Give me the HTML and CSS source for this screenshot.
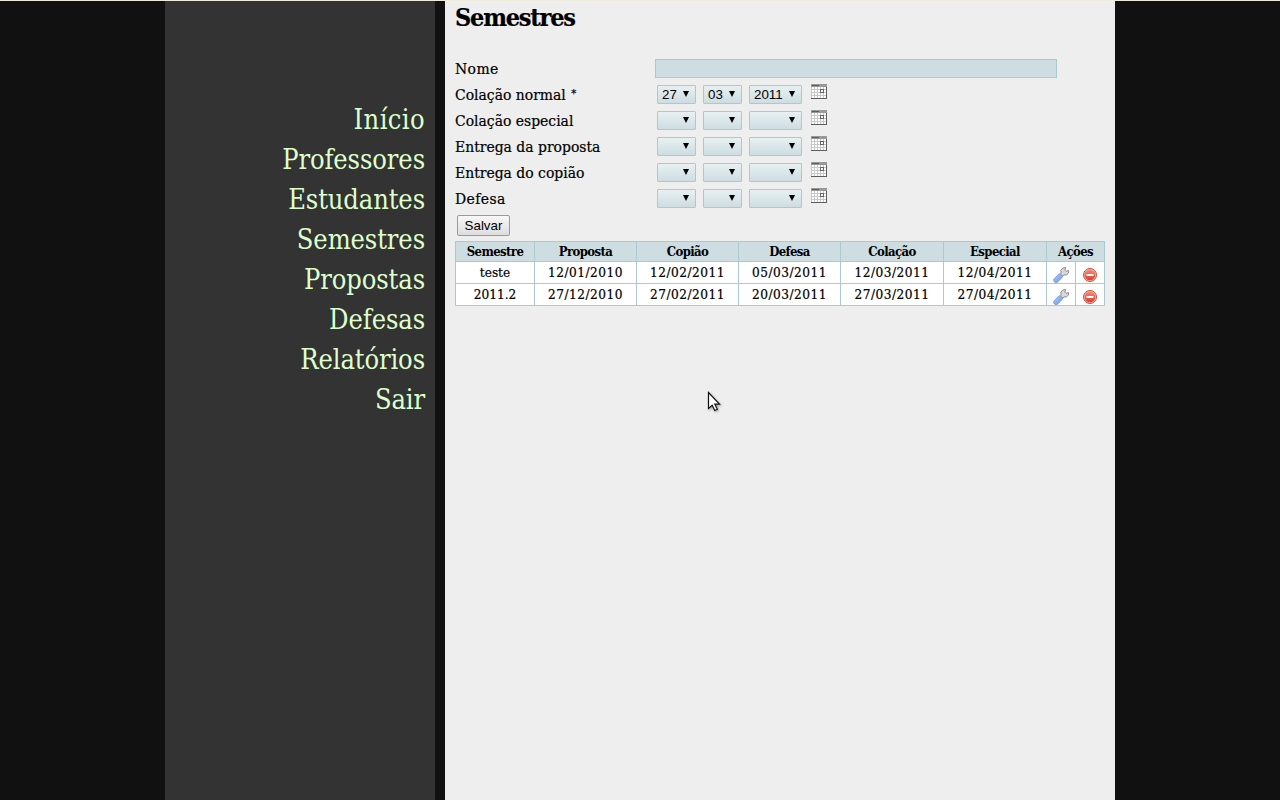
FILE: index.html
```html
<!DOCTYPE html>
<html lang="pt-BR">
<head>
<meta charset="utf-8">
<title>Semestres</title>
<link rel="stylesheet" href="styles.css">
</head>
<body>
<svg class="defs" width="0" height="0" aria-hidden="true">
  <defs>
    <linearGradient id="handle" x1="0" y1="0" x2="1" y2="1"><stop offset="0" stop-color="#b9d2fb"/><stop offset="1" stop-color="#6591e0"/></linearGradient>
    <linearGradient id="red" x1="0" y1="0" x2="0" y2="1"><stop offset="0" stop-color="#f28a7c"/><stop offset="1" stop-color="#dc3b2b"/></linearGradient>
    <symbol id="calendar" viewBox="0 0 16 15">
      <path fill="#fff" d="M0 0h16v15H0z"/>
      <path fill="#c8c8c8" d="M0 3h1v11H0zM3 3h1v11H3zM6 3h1v11H6zM9 3h1v11H9zM12 3h1v11h-1zM0 5h15v1H0zM0 8h15v1H0zM0 11h15v1H0z"/>
      <path fill="#999" d="M0 0h16v3H0z"/>
      <path fill="#5d5d5d" d="M1 1h7v1H1zM15 3h1v12H0v-1h15z"/>
      <path fill="#666" d="M9 5h4v4H9z"/>
      <path fill="#fff" d="M10 6h2v2h-2z"/>
    </symbol>
    <symbol id="wrench" viewBox="0 0 16 16">
      <path d="M7.600 7.800 8.100 5.200 7.800 3.200 9.800 1l2.900-.5-.8 2.600 1.200 1.300 2.400-1 .1 2.500-2.200 2-2.400.1-2 1.500z" fill="#d9d9d9" stroke="#808080" stroke-width=".9" stroke-linejoin="round"/>
      <path d="M.9 12 5.800 7q1-.7 1.900.1l1.500 1.500q.8 1 0 1.900l-4.800 4.700q-1.400.8-2.700 0-2-1.300-.8-3.200z" fill="url(#handle)" stroke="#7494d3" stroke-width=".8"/>
    </symbol>
    <symbol id="remove" viewBox="0 0 14 14">
      <circle cx="7" cy="7" r="6.500" fill="#fbb3a9" stroke="#cf493b"/>
      <circle cx="7" cy="7" r="5.300" fill="url(#red)"/>
      <path fill="#fff" d="M3.500 6h7v2h-7z"/>
    </symbol>
    <symbol id="arrow" viewBox="0 0 6 6"><path d="M0 0h6L3 6z"/></symbol>
  </defs>
</svg>
<div class="page">
  <nav class="menu">
    <a class="home">Início</a><a>Professores</a><a>Estudantes</a><a>Semestres</a><a>Propostas</a><a>Defesas</a><a>Relatórios</a><a>Sair</a>
  </nav>
  <main class="content">
    <h1>Semestres</h1>
    <form>
      <div class="row"><label class="short">Nome</label><input class="name" type="text"></div>
      <div class="row"><label>Colação normal <span class="req">*</span></label><div class="date"><span class="sel"><select><option>27</option></select><svg><use href="#arrow"/></svg></span><span class="sel"><select><option>03</option></select><svg><use href="#arrow"/></svg></span><span class="sel year"><select><option>2011</option></select><svg><use href="#arrow"/></svg></span><svg class="cal"><use href="#calendar"/></svg></div></div>
      <div class="row"><label>Colação especial</label><div class="date"><span class="sel"><select></select><svg><use href="#arrow"/></svg></span><span class="sel"><select></select><svg><use href="#arrow"/></svg></span><span class="sel year"><select></select><svg><use href="#arrow"/></svg></span><svg class="cal"><use href="#calendar"/></svg></div></div>
      <div class="row"><label>Entrega da proposta</label><div class="date"><span class="sel"><select></select><svg><use href="#arrow"/></svg></span><span class="sel"><select></select><svg><use href="#arrow"/></svg></span><span class="sel year"><select></select><svg><use href="#arrow"/></svg></span><svg class="cal"><use href="#calendar"/></svg></div></div>
      <div class="row"><label>Entrega do copião</label><div class="date"><span class="sel"><select></select><svg><use href="#arrow"/></svg></span><span class="sel"><select></select><svg><use href="#arrow"/></svg></span><span class="sel year"><select></select><svg><use href="#arrow"/></svg></span><svg class="cal"><use href="#calendar"/></svg></div></div>
      <div class="row"><label class="short">Defesa</label><div class="date"><span class="sel"><select></select><svg><use href="#arrow"/></svg></span><span class="sel"><select></select><svg><use href="#arrow"/></svg></span><span class="sel year"><select></select><svg><use href="#arrow"/></svg></span><svg class="cal"><use href="#calendar"/></svg></div></div>
      <button type="button" class="save">Salvar</button>
    </form>
    <div class="grid">
      <b>Semestre</b><b>Proposta</b><b>Copião</b><b>Defesa</b><b>Colação</b><b>Especial</b><b class="wide">Ações</b>
      <span class="word">teste</span><span>12/01/2010</span><span>12/02/2011</span><span>05/03/2011</span><span>12/03/2011</span><span>12/04/2011</span><i><svg class="wrench"><use href="#wrench"/></svg></i><i><svg class="remove"><use href="#remove"/></svg></i>
      <span class="word">2011.2</span><span>27/12/2010</span><span>27/02/2011</span><span>20/03/2011</span><span>27/03/2011</span><span>27/04/2011</span><i><svg class="wrench"><use href="#wrench"/></svg></i><i><svg class="remove"><use href="#remove"/></svg></i>
    </div>
  </main>
</div>
<svg class="cursor" viewBox="0 0 14 22"><path d="M1.500 1.500v16l3.700-3.300 2.500 5.300 2.600-1.200-2.500-5.100h4.700z" fill="#fff" stroke="#111" stroke-width="1.200"/></svg>
</body>
</html>
```
FILE: styles.css
```css
* { box-sizing: border-box; }
body {
  margin: 0;
  height: 800px;
  overflow: hidden;
  background: #111;
  border-top: 1px solid #eeeadc;
  color: #000;
  font-family: "DejaVu Serif Condensed", "DejaVu Serif", serif;
  font-stretch: condensed;
}
.defs { display: block; position: absolute; }
.page { display: flex; gap: 10px; width: 950px; height: 799px; margin: 0 auto; }
.menu {
  width: 270px;
  padding: 99px 10px 0 0;
  background: #333;
  color: #dfc;
  display: flex;
  flex-direction: column;
  align-items: flex-end;
  font-size: 27px;
  line-height: 40px;
  letter-spacing: -0.1px;
}
.home { letter-spacing: 0.4px; }
.content { width: 670px; padding: 0 10px; background: #eee; }
h1 { margin: 0 0 24px; font-size: 25px; line-height: 33px; letter-spacing: -1.200px; -webkit-text-stroke: 0.2px #000; }
.row { display: flex; height: 26px; font-size: 15.500px; }
label { width: 200px; line-height: 23px; white-space: nowrap; -webkit-text-stroke: 0.2px #000; }
.short { letter-spacing: 0.4px; }
.req { position: relative; top: -3px; font-size: 11px; line-height: 1; margin-left: 1px; }
.name { width: 402px; height: 19px; margin-top: 1px; border: 1px solid #acc9ce; background: #cddde2; padding: 0; }
.date { display: flex; gap: 7px; padding: 1px 0 0 2px; }
.sel { position: relative; width: 39px; height: 19px; }
.year { width: 53px; }
select {
  display: block;
  width: 100%;
  height: 19px;
  padding: 0 0 0 4px;
  appearance: none;
  border: 1px solid #acc9ce;
  border-radius: 1px;
  background: linear-gradient(#e8f0f2, #cddde2);
  font: 13.333px "Liberation Sans", sans-serif;
  color: #000;
}
.sel svg { position: absolute; right: 7px; top: 6px; width: 6px; height: 6px; }
.cal { width: 16px; height: 15px; margin: -1px 0 0 2px; shape-rendering: crispEdges; }
.save {
  display: block;
  width: 53px;
  height: 21px;
  margin: 1px 0 5px 2px;
  padding: 0;
  border: 1px solid #999;
  border-radius: 2px;
  background: linear-gradient(#f8f8f8, #ddd);
  font: 13.333px "Liberation Sans", sans-serif;
  color: #000;
}
.grid {
  display: grid;
  grid-template-columns: 78px 101px 101px 101px 102px 102px 28px 28px;
  grid-template-rows: 19px 21px 21px;
  gap: 1px;
  padding: 1px;
  width: 650px;
  background: #acc9ce;
  font-size: 13px;
  text-align: center;
}
.grid b { background: #cddde2; line-height: 19px; letter-spacing: -0.6px; }
.grid .wide { grid-column: span 2; }
.grid span { background: #fff; line-height: 21px; font-size: 13.500px; letter-spacing: 0.500px; -webkit-text-stroke: 0.2px #000; }
.grid .word { letter-spacing: 0; }
.grid i { display: flex; justify-content: center; align-items: flex-end; background: #fff; }
.wrench { width: 16px; height: 16px; }
.remove { width: 14px; height: 14px; margin-bottom: 1px; }
.cursor { position: absolute; left: 707px; top: 391px; width: 14px; height: 22px; filter: drop-shadow(1px 1px 1px #0005); }
```
